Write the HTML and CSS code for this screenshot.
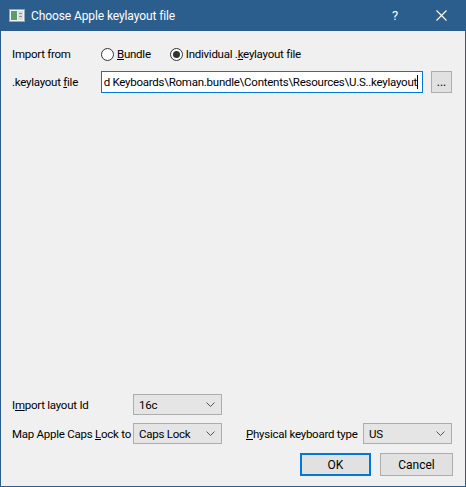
FILE: index.html
```html
<!DOCTYPE html>
<html lang="en">
<head>
    <meta charset="UTF-8">
    <title>Choose Apple keylayout file</title>
    <link rel="stylesheet" href="styles.css">
</head>
<body>

    <div class="window">
        <div class="titlebar">
            <svg class="app-icon" width="16" height="13" viewBox="0 0 16 13">
                <rect x="0.5" y="0.5" width="15" height="12" fill="#f4f4f4" stroke="#9aa7b3"/>
                <rect x="2" y="2" width="6" height="9" fill="#5f9a6e"/>
                <rect x="9" y="2" width="5" height="9" fill="#d8dde2"/>
                <rect x="10" y="4" width="3" height="1" fill="#8a949e"/>
                <rect x="10" y="7" width="3" height="1" fill="#8a949e"/>
            </svg>
            <span class="title">Choose Apple keylayout file</span>
            <span class="help">?</span>
            <svg class="close" width="11" height="11" viewBox="0 0 11 11">
                <path d="M0.5 0.5 L10.5 10.5 M10.5 0.5 L0.5 10.5" stroke="#ffffff" stroke-width="1.1"/>
            </svg>
        </div>

        <div class="content">
            <div class="row row-import">
                <span class="label label-top">Import from</span>
                <label class="radio">
                    <span class="dot"></span>
                    <span><u>B</u>undle</span>
                </label>
                <label class="radio checked">
                    <span class="dot"></span>
                    <span>Individual .<u>k</u>eylayout file</span>
                </label>
            </div>

            <div class="row row-file">
                <span class="label label-top">.keylayout <u>f</u>ile</span>
                <div class="field">
                    <span class="field-text">d Keyboards\Roman.bundle\Contents\Resources\U.S..keylayout</span>
                    <span class="caret"></span>
                </div>
                <button class="btn btn-browse">...</button>
            </div>

            <div class="spacer"></div>

            <div class="row row-combo">
                <span class="label label-bottom">I<u>m</u>port layout Id</span>
                <div class="combo">
                    <span>16c</span>
                    <svg width="9" height="5" viewBox="0 0 9 5"><path d="M0.5 0.5 L4.5 4.5 L8.5 0.5" fill="none" stroke="#555"/></svg>
                </div>
            </div>

            <div class="row row-combo">
                <span class="label label-bottom">Map Apple Caps <u>L</u>ock to</span>
                <div class="combo">
                    <span>Caps Lock</span>
                    <svg width="9" height="5" viewBox="0 0 9 5"><path d="M0.5 0.5 L4.5 4.5 L8.5 0.5" fill="none" stroke="#555"/></svg>
                </div>
                <span class="label label-physical"><u>P</u>hysical keyboard type</span>
                <div class="combo">
                    <span>US</span>
                    <svg width="9" height="5" viewBox="0 0 9 5"><path d="M0.5 0.5 L4.5 4.5 L8.5 0.5" fill="none" stroke="#555"/></svg>
                </div>
            </div>

            <div class="buttons">
                <button class="btn btn-ok">OK</button>
                <button class="btn btn-cancel">Cancel</button>
            </div>
        </div>
    </div>

</body>
</html>
```

FILE: styles.css
```css
html, body {
    margin: 0;
    padding: 0;
}

body {
    font-family: Roboto, "Liberation Sans", Arial, sans-serif;
    font-size: 11.5px;
    letter-spacing: -0.25px;
    color: #000;
    background: #f0f0f0;
}

.window {
    width: 466px;
    height: 487px;
    box-sizing: border-box;
    border: 1px solid #2b5e8d;
    border-top: none;
    display: flex;
    flex-direction: column;
    background: #f0f0f0;
}

.titlebar {
    height: 31px;
    background: #2b5e8d;
    color: #fff;
    display: flex;
    align-items: center;
    margin: 0 -1px;
    padding-left: 9px;
}

.app-icon {
    margin-right: 6px;
}

.title {
    flex: 1;
    font-size: 12px;
    letter-spacing: -0.1px;
}

.help {
    font-size: 13px;
    margin-right: 38px;
}

.close {
    margin-right: 19px;
}

.content {
    flex: 1;
    display: flex;
    flex-direction: column;
    padding: 13px 11px 10px 11px;
}

.row {
    display: flex;
    align-items: center;
}

.label {
    white-space: nowrap;
}

.row-import {
    height: 20px;
}

.row-file {
    margin-top: 7px;
}

.label-top {
    width: 89px;
}

.label-bottom {
    width: 121px;
}

.label-physical {
    margin-left: 24px;
    width: 117px;
}

.radio {
    display: flex;
    align-items: center;
    margin-right: 19px;
    white-space: nowrap;
}

.radio .dot {
    width: 11px;
    height: 11px;
    border: 1px solid #333;
    border-radius: 50%;
    background: #fff;
    margin-right: 3px;
    display: flex;
    align-items: center;
    justify-content: center;
}

.radio.checked .dot::after {
    content: "";
    width: 7px;
    height: 7px;
    border-radius: 50%;
    background: #333;
}

.field {
    width: 316px;
    height: 20px;
    border: 1px solid #0078d7;
    background: #fff;
    display: flex;
    align-items: center;
    justify-content: flex-end;
    overflow: hidden;
    padding-right: 4px;
}

.field-text {
    white-space: nowrap;
    flex-shrink: 0;
}

.caret {
    width: 1px;
    height: 14px;
    background: #000;
    flex-shrink: 0;
}

.btn {
    font-family: inherit;
    font-size: 12px;
    letter-spacing: 0;
    color: #000;
    background: #e1e1e1;
    border: 1px solid #adadad;
    padding: 0;
    box-sizing: border-box;
}

.btn-browse {
    margin-left: 8px;
    width: 21px;
    height: 22px;
}

.spacer {
    flex: 1;
}

.row-combo {
    margin-bottom: 8px;
}

.combo {
    width: 89px;
    height: 21px;
    box-sizing: border-box;
    border: 1px solid #adadad;
    background: #e5e5e5;
    display: flex;
    align-items: center;
    justify-content: space-between;
    padding: 0 6px 0 5px;
}

.buttons {
    display: flex;
    justify-content: flex-end;
    gap: 9px;
    margin-top: 1px;
    padding-right: 1px;
}

.btn-ok {
    width: 71px;
    height: 23px;
    border: 2px solid #0078d7;
}

.btn-cancel {
    width: 73px;
    height: 23px;
}
```
